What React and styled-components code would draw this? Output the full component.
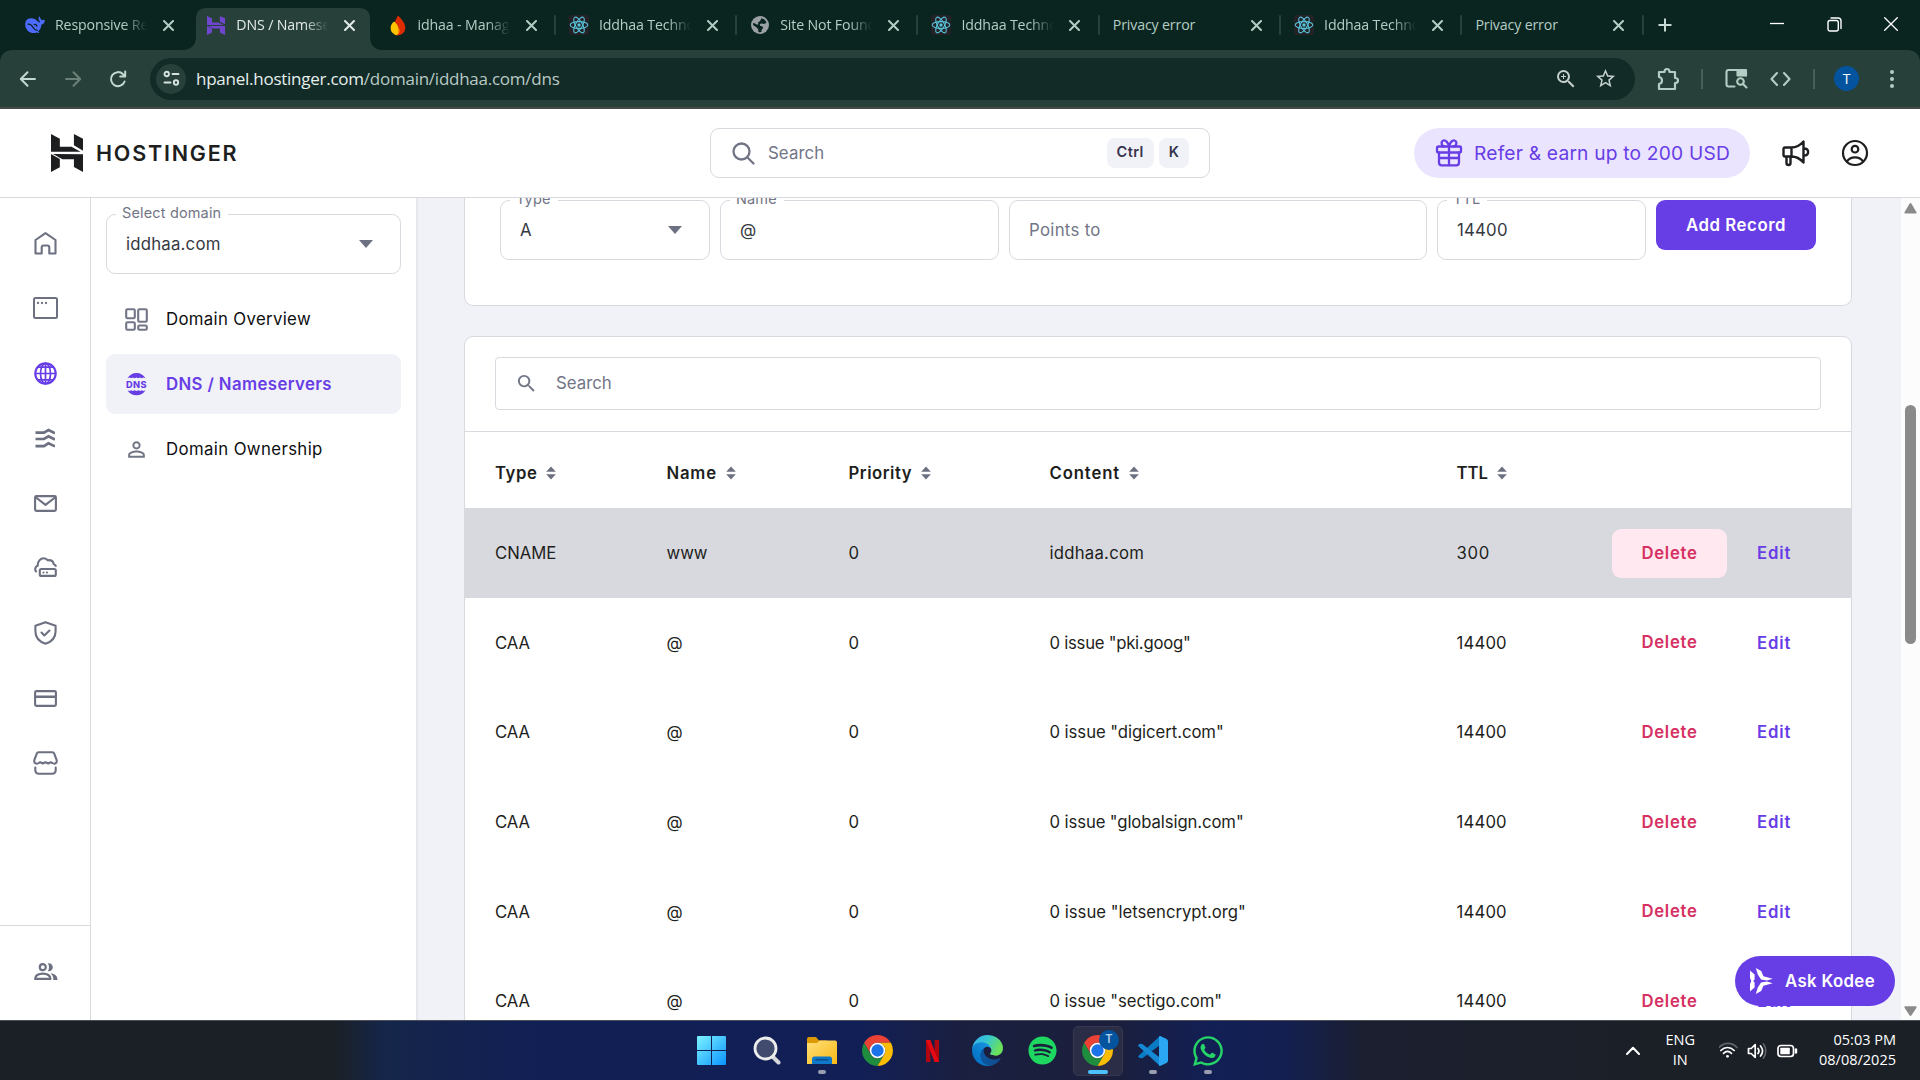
import React from "react";
import styled, { createGlobalStyle, css } from "styled-components";
import { FaSpotify, FaWhatsapp } from "react-icons/fa";
import { MdPersonOutline, MdSearch, MdZoomIn, MdStarBorder } from "react-icons/md";

const UI = `Inter, "DejaVu Sans", sans-serif`;
const OS = `"Open Sans", "Noto Sans", sans-serif`;
const PURPLE = "#673de6";
const LINE = "#d8dae0";
const GRAY = "#727586";
const INK = "#1d1e20";
const MINT = "#b4cdc4";

const GlobalStyle = createGlobalStyle`
  * { box-sizing: border-box; }
  body { margin: 0; overflow: hidden; background: #fff; }
  svg { display: block; flex: none; }
`;

const Screen = styled.div`
  width: 1920px;
  height: 1080px;
  display: flex;
  flex-direction: column;
  overflow: hidden;
  font-family: ${UI};
  color: ${INK};
`;

/* ---------- browser ---------- */
const TabStrip = styled.div`
  height: 50px;
  flex: none;
  display: flex;
  align-items: stretch;
  padding-left: 12px;
  background: #0a2520;
  font-family: ${OS};
`;
const Tab = styled.div`
  position: relative;
  width: 181.3px;
  flex: none;
  display: flex;
  align-items: center;
  padding: 0 0 0 13px;
  color: ${(p) => (p.$active ? "#e2ebe7" : MINT)};
`;
const ActiveShape = styled.svg`
  position: absolute;
  left: -11px;
  top: 8px;
`;
const TabIcon = styled.div`
  position: relative;
  width: 20px;
  margin-right: 10px;
  display: flex;
  justify-content: center;
`;
const TabTitle = styled.div`
  position: relative;
  width: ${(p) => (p.$wide ? 123 : 93)}px;
  overflow: hidden;
  white-space: nowrap;
  font-size: 14.2px;
  line-height: 24px;
  letter-spacing: -0.15px;
  ${(p) =>
    !p.$wide &&
    css`
      mask-image: linear-gradient(90deg, #000 74%, transparent 99%);
    `}
`;
const TabClose = styled.div`
  position: relative;
  width: 41px;
  display: flex;
  justify-content: center;
`;
const TabDivider = styled.div`
  width: 2px;
  height: 20px;
  margin-left: auto;
  border-radius: 1px;
  background: ${(p) => (p.$hidden ? "transparent" : "#28403a")};
`;
const NewTab = styled.div`
  width: 42px;
  display: flex;
  align-items: center;
  justify-content: center;
`;
const WindowButtons = styled.div`
  margin-left: auto;
  display: flex;
  align-items: center;
  gap: 42.5px;
  padding: 0 22px 2px 0;
`;
const ToolbarBack = styled.div`
  height: 59px;
  flex: none;
  background: #0a2520;
`;
const Toolbar = styled.div`
  height: 59px;
  display: flex;
  align-items: center;
  border-radius: 12px 12px 0 0;
  background: #28403a;
  border-bottom: 2px solid #434a48;
  padding: 0 20px 0 18px;
`;
const NavButtons = styled.div`
  width: 132px;
  flex: none;
  display: flex;
  gap: 25px;
`;
const AddressBar = styled.div`
  width: 1485px;
  flex: none;
  height: 42px;
  display: flex;
  align-items: center;
  border-radius: 21px;
  background: #122b27;
  padding: 0 18px 0 6px;
`;
const SiteInfo = styled.div`
  width: 30px;
  height: 30px;
  display: flex;
  align-items: center;
  justify-content: center;
  border-radius: 50%;
  background: #28403a;
`;
const Url = styled.div`
  flex: 1;
  margin-left: 10px;
  font: 17px/26px ${OS};
  letter-spacing: -0.25px;
  color: #b9c9c4;
  b {
    font-weight: 400;
    color: #e6efec;
  }
`;
const BarIcons = styled.div`
  display: flex;
  align-items: center;
  gap: 16px;
  color: #c3cfcb;
`;
const Extensions = styled.div`
  flex: 1;
  display: flex;
  align-items: center;
  justify-content: space-between;
  margin-left: 22px;
  color: ${MINT};
`;
const BarDivider = styled.div`
  width: 2px;
  height: 20px;
  background: #45605a;
`;
const Avatar = styled.div`
  width: 25px;
  height: 25px;
  margin: 0 3px 0 -3px;
  border-radius: 50%;
  background: #03539f;
  color: #fff;
  font: 14px/25px ${OS};
  text-align: center;
`;

/* ---------- header ---------- */
const Header = styled.header`
  height: 89px;
  flex: none;
  display: flex;
  align-items: center;
  border-bottom: 1px solid ${LINE};
  background: #fff;
  padding: 0 51px;
`;
const Brand = styled.div`
  width: 659px;
  display: flex;
  align-items: center;
  gap: 13px;
  font-size: 21.5px;
  font-weight: 600;
  letter-spacing: 1.8px;
`;
const HeaderSearch = styled.div`
  width: 500px;
  height: 50px;
  display: flex;
  align-items: center;
  border: 1px solid ${LINE};
  border-radius: 9px;
  padding: 0 20px 0 21px;
  color: ${GRAY};
  font-size: 16.8px;
`;
const SearchHint = styled.span`
  flex: 1;
  margin-left: 13px;
  letter-spacing: 0.1px;
`;
const Key = styled.kbd`
  height: 30px;
  margin-left: 5px;
  padding: 0 10px;
  border-radius: 8px;
  background: #f1f2f7;
  color: #36344d;
  font: 600 14.5px/28px ${UI};
  letter-spacing: ${(p) => p.$ls || 0}px;
`;
const HeaderActions = styled.div`
  margin-left: auto;
  display: flex;
  align-items: center;
  gap: 31.5px;
`;
const ReferPill = styled.div`
  width: 336px;
  height: 50px;
  display: flex;
  align-items: center;
  gap: 11px;
  padding-left: 21px;
  border-radius: 25px;
  background: #ebe4ff;
  color: ${PURPLE};
  font-size: 19.2px;
  letter-spacing: 0.19px;
  white-space: nowrap;
`;

/* ---------- body ---------- */
const Body = styled.div`
  height: 822px;
  flex: none;
  display: flex;
  overflow: hidden;
`;
const Rail = styled.nav`
  width: 91px;
  flex: none;
  display: flex;
  flex-direction: column;
  border-right: 1px solid ${LINE};
  color: #6d7081;
  padding-top: 13px;
`;
const RailItem = styled.div`
  height: 64.95px;
  flex: none;
  display: flex;
  align-items: center;
  justify-content: center;
  color: ${(p) => (p.$active ? PURPLE : "inherit")};
`;
const RailFooter = styled.div`
  height: 95px;
  margin-top: auto;
  display: flex;
  justify-content: center;
  padding: 37px 0 0 1px;
  border-top: 1px solid ${LINE};
`;
const Sidebar = styled.aside`
  width: 327px;
  flex: none;
  border-right: 2px solid #e6e8ee;
  padding: 16px 15px 0;
`;
const Field = styled.div`
  position: relative;
  width: ${(p) => p.$w}px;
  height: 60px;
  flex: none;
  display: flex;
  align-items: center;
  justify-content: space-between;
  padding: 0 27px 0 19px;
  border: 1px solid ${LINE};
  border-radius: 9px;
  font-size: 16.8px;
  letter-spacing: ${(p) => p.$ls || 0}px;
  color: ${(p) => (p.$empty ? GRAY : "#36383f")};
`;
const FieldLabel = styled.span`
  position: absolute;
  left: 9px;
  top: -12px;
  padding: 0 7px 0 6px;
  background: #fff;
  color: ${GRAY};
  font-size: 14.5px;
  line-height: 20px;
  letter-spacing: 0.15px;
`;
const MenuItem = styled.div`
  height: 60px;
  display: flex;
  align-items: center;
  gap: 18px;
  margin-top: ${(p) => p.$gap}px;
  padding-left: 19px;
  border-radius: 9px;
  background: ${(p) => (p.$active ? "#f1f2f7" : "transparent")};
  color: ${(p) => (p.$active ? PURPLE : "#0d0e10")};
  font-size: 16.8px;
  font-weight: ${(p) => (p.$active ? 600 : 400)};
  letter-spacing: ${(p) => p.$ls}px;
  svg {
    color: ${(p) => (p.$active ? PURPLE : "#727586")};
  }
`;
const PersonIcon = styled(MdPersonOutline)`
  margin: 0 -1px;
  font-size: 25px;
`;
const Main = styled.main`
  flex: 1;
  display: flex;
  flex-direction: column;
  gap: 30px;
  overflow: hidden;
  padding-left: 46px;
  background: #f1f2f7;
`;
const FormCard = styled.section`
  width: 1388px;
  height: 108px;
  flex: none;
  display: flex;
  align-items: flex-start;
  gap: 10px;
  padding: 2px 35px 0;
  background: #fff;
  border: 1px solid ${LINE};
  border-top: 0;
  border-radius: 0 0 9px 9px;
`;
const AddButton = styled.button`
  width: 160px;
  height: 50px;
  border: 0;
  padding: 0;
  border-radius: 9px;
  background: ${PURPLE};
  color: #fff;
  font: 600 16.8px ${UI};
  letter-spacing: 0.55px;
`;
const TableCard = styled.section`
  width: 1388px;
  height: 900px;
  flex: none;
  background: #fff;
  border: 1px solid ${LINE};
  border-radius: 9px 9px 0 0;
`;
const TableSearch = styled.div`
  height: 95px;
  padding: 20px 30px 0;
  border-bottom: 1px solid ${LINE};
`;
const SearchInput = styled.div`
  height: 53px;
  display: flex;
  align-items: center;
  gap: 18px;
  padding: 0 19px;
  border: 1px solid ${LINE};
  border-radius: 4px;
  color: ${GRAY};
  font-size: 16.8px;
  span {
    padding-bottom: 1px;
  }
`;
const Row = styled.div`
  display: grid;
  grid-template-columns: 171.5px 182px 201px 407px 155px 115px 1fr;
  align-items: center;
  height: 89.6px;
  margin: 0 -1px;
  padding: 1px 0 0 31px;
  font-size: 16.7px;
  background: ${(p) => (p.$hover ? "#d8d9df" : "transparent")};
`;
const HeadRow = styled(Row)`
  height: 76px;
  padding-top: 6px;
  font-weight: 600;
`;
const HeadCell = styled.div`
  display: flex;
  align-items: center;
  gap: 9px;
  letter-spacing: ${(p) => p.$ls}px;
`;
const Cell = styled.span`
  letter-spacing: ${(p) => p.$ls || 0}px;
`;
const DeleteButton = styled.div`
  height: 49px;
  padding-left: 1px;
  line-height: 49px;
  border-radius: 9px;
  text-align: center;
  font-weight: 600;
  letter-spacing: 0.7px;
  color: #d63163;
  background: ${(p) => (p.$hover ? "#ffe8ef" : "transparent")};
`;
const EditLink = styled.div`
  padding-left: 30.5px;
  font-weight: 600;
  letter-spacing: 0.9px;
  color: ${PURPLE};
`;
const Scrollbar = styled.div`
  width: 19px;
  flex: none;
  display: flex;
  flex-direction: column;
  align-items: center;
  background: #fcfcfc;
  padding: 5px 0 4px;
`;
const Thumb = styled.div`
  width: 11px;
  height: 239px;
  margin: 191px 0 auto;
  border-radius: 6px;
  background: #8a8a8a;
`;
const Kodee = styled.div`
  position: fixed;
  left: 1735px;
  top: 956px;
  width: 160px;
  height: 50px;
  display: flex;
  align-items: center;
  gap: 12px;
  padding-left: 15px;
  border-radius: 25px;
  background: ${PURPLE};
  color: #fff;
  font-size: 16.8px;
  font-weight: 600;
  letter-spacing: 0.35px;
  white-space: nowrap;
`;

/* ---------- taskbar ---------- */
const Taskbar = styled.footer`
  height: 60px;
  flex: none;
  display: flex;
  align-items: center;
  border-top: 1px solid #4a4f58;
  background: linear-gradient(90deg, #1b2027 0%, #1b2027 17.5%, #15264a 20%, #121f55 28%, #121f56 45%, #1a1f40 50%, #1b1f3c 58%, #121f55 63%, #131f50 67%, #1b1f30 71%, #1b2027 86%);
  padding: 0 24px 0 686.5px;
  color: #fff;
  font-family: ${OS};
`;
const AppButton = styled.div`
  position: relative;
  width: 50px;
  height: 50px;
  flex: none;
  margin-right: 5.2px;
  display: flex;
  align-items: center;
  justify-content: center;
  border-radius: 5px;
  border: 1px solid ${(p) => (p.$active ? "#35384f" : "transparent")};
  background: ${(p) => (p.$active ? "#2a2d45" : "transparent")};
`;
const Indicator = styled.div`
  position: absolute;
  bottom: 1px;
  width: ${(p) => (p.$active ? 20 : 8)}px;
  height: 4px;
  border-radius: 2px;
  background: ${(p) => (p.$active ? "#4cc2ff" : "#9a9db0")};
`;
const Badge = styled.div`
  position: absolute;
  right: 3px;
  top: 3px;
  width: 20px;
  height: 20px;
  border-radius: 50%;
  background: #03539f;
  color: #b9d3ea;
  font: 600 12px/18px ${OS};
  text-align: center;
`;
const Tray = styled.div`
  margin-left: auto;
  display: flex;
  align-items: center;
`;
const TrayText = styled.div`
  text-align: ${(p) => p.$align};
  font-size: 14.5px;
  line-height: 20px;
  white-space: nowrap;
  margin-left: ${(p) => p.$ml}px;
  padding-bottom: 1px;
`;
const TrayIcons = styled.div`
  margin-left: 24px;
`;

/* ---------- drawings ---------- */
const Svg = ({ w = 24, h, box = "0 0 24 24", sw = 2, children }) => (
  <svg width={w} height={h || w} viewBox={box} fill="none" stroke="currentColor" strokeWidth={sw} strokeLinecap="round" strokeLinejoin="round">
    {children}
  </svg>
);

const Mark = ({ w, h, color }) => (
  <svg width={w} height={h} viewBox="1.8 0 20.4 24" preserveAspectRatio="none" fill={color}>
    <path d="M16.415 0v7.16l5.785 3.384V2.949L16.415 0ZM1.8 0v11.237h18.815L14.89 8.09l-7.457-.003V3.024L1.8 0Zm14.615 20.894v-5.019l-7.514-.005c.007.033-5.82-3.197-5.82-3.197l19.119.091V24l-5.785-3.106ZM1.8 13.551V24l5.633-3.050v-5.100L1.8 12.700Z" />
  </svg>
);

const Whale = () => (
  <svg width="20" height="18" viewBox="0 0 20 18">
    <path fill="#4d6bfe" d="M10.3 3.2C7 1.5 3 2 1.2 4.600C-.8 7.600.3 12.500 3 15c2.600 2.300 6 2.400 8.600 1.400l2.200.6c.5.100.7-.5.3-.8l-.9-.8c2-1.500 3-4 3.100-6.600 1.900-.4 3.100-1.800 3.500-4.300.1-.7-.4-1-.9-.7-1 .6-2 .5-2.800-.3-.7-.7-1-1.700-1.300-2.600-.2-.6-.8-.6-1 0-.4 1.500-.2 3 .8 4.300.4.500.5 1 .3 1.600-1-.6-2.400-1.600-4.600-3.600z" />
    <path fill="none" stroke="#0a2520" strokeWidth="1.300" strokeLinecap="round" d="M3 8.200c2.500-.4 4 1.200 5.300 3.500 1 1.700 2.200 2.600 4 2.600M9.300 8.600c1.200-.4 2.400.3 2.600 1.600" />
  </svg>
);

const Flame = () => (
  <svg width="16" height="21" viewBox="0 0 16 21">
    <path fill="#dd2c00" d="M8 .5c3 3 7.300 7.500 7.300 12.300A7.500 7.500 0 0 1 5 19.800L4.500 9C5 5.500 6.500 3 8 .5z" />
    <path fill="#ffc400" d="M4 6.500c1.500 1 3.800 3.500 4.400 6 .5 2.500 0 5.500-1.400 7.800A7.300 7.300 0 0 1 .6 13C.6 10 2.300 8 4 6.500z" />
    <path fill="#ff9100" d="M8.500 13c2 1.500 1.500 5.500-1.400 7.300C8 18 8.700 15.500 8.500 13z" />
  </svg>
);

const Atom = () => (
  <svg width="20" height="20" viewBox="0 0 20 20" fill="none" stroke="#58c4dc" strokeWidth="1.100">
    <rect width="20" height="20" rx="2" fill="#232226" stroke="none" />
    <ellipse cx="10" cy="10" rx="8.800" ry="3.400" />
    <ellipse cx="10" cy="10" rx="8.800" ry="3.400" transform="rotate(60 10 10)" />
    <ellipse cx="10" cy="10" rx="8.800" ry="3.400" transform="rotate(120 10 10)" />
    <circle cx="10" cy="10" r="1.700" fill="#58c4dc" stroke="none" />
  </svg>
);

const Earth = () => (
  <svg width="18" height="18" viewBox="0 0 18 18">
    <circle cx="9" cy="9" r="9" fill="#9aa0a6" />
    <path fill="#0a2520" d="M10.500 2.200c2.500.6 4.300 2.300 5 4.500l-2.300 1.300-2.700-.6-1.700.6.300 1.800 2.300.6.800 1.400-1.500 2-.3 2.200c-1 .2-2 .2-3-.1l-.2-2.600-1.900-2L2 9c0-.8.200-1.500.5-2.200l3.800 2 1.200-.7-.6-1.600 2-1.200z" />
  </svg>
);

const Cross = () => (
  <Svg w={11} box="0 0 11 11" sw={2}>
    <path d="M1 1l9 9M10 1l-9 9" />
  </Svg>
);

const SortArrows = () => (
  <svg width="10" height="14" viewBox="0 0 10 14" fill="#6d7081">
    <path d="M5 .5L9.800 5.700H.2zM5 13.500L9.800 8.300H.2z" />
  </svg>
);
const Caret = () => (
  <svg width="14" height="8" viewBox="0 0 14 8" fill="#6d7081">
    <path d="M0 0h14L7 8z" />
  </svg>
);

const icons = {
  home: (
    <Svg w={23} box="0 0 23 23" sw={2.100}>
      <path d="M1.500 8L11.500 1.200 21.500 8v13.500h-6.200v-6a2 2 0 0 0-2-2h-3.600a2 2 0 0 0-2 2v6H1.500z" />
    </Svg>
  ),
  site: (
    <Svg w={25} h={22} box="0 0 25 22">
      <rect x="1" y="1" width="23" height="20" rx="1.500" />
      <path d="M5 6h.01M9 6h.01M13 6h.01" strokeWidth="2.300" />
    </Svg>
  ),
  globe: (
    <Svg w={23} box="0 0 23 23" sw={2.100}>
      <circle cx="11.500" cy="11.500" r="10.200" />
      <ellipse cx="11.500" cy="11.500" rx="5" ry="10.200" strokeWidth="1.700" />
      <path d="M11.500 1.500v20M1.500 11.500h20" strokeWidth="1.700" />
      <path d="M4.500 5.200h14M4.500 17.800h14" strokeWidth="1.800" />
    </Svg>
  ),
  waves: (
    <svg width="20" height="20" viewBox="0 0 20 20" fill="none" stroke="currentColor" strokeWidth="2.700">
      <path d="M.5 4.700H9L13.500 2l6.500 3.200M.5 11H9l4.500-2.700 6.500 3.200M.5 18.200H9l4.500-3 6.500 3.200" />
    </svg>
  ),
  mail: (
    <Svg w={23} h={17} box="0 0 23 17" sw={2.100}>
      <rect x="1.100" y="1.100" width="20.800" height="14.800" rx="1.300" />
      <path d="M2 2.500l9.500 7.300 9.500-7.300" />
    </Svg>
  ),
  cloud: (
    <Svg w={23} h={22} box="0 0 23 22" sw={2.100}>
      <path d="M2 14.500C.4 12.500 1.300 9.500 3.800 8.800 3.300 4.500 6.500 1.200 10 1.300c1.800.1 2.700.8 3.700 1.900 3.500-.5 5.500 1 6.100 4 .9.200 1.500.8 1.900 1.600" />
      <rect x="5.800" y="12" width="16" height="6.900" rx="1.500" />
      <path d="M9.500 15.500h.01M13 15.500h.01" />
    </Svg>
  ),
  shield: (
    <Svg w={23} h={24} box="0 0 23 24" sw={2.100}>
      <path d="M11.500 1.200L21.600 4.700v5.500c0 6-4 10.500-10.100 12.600C5.400 20.700 1.400 16.200 1.400 10.200V4.700z" />
      <path d="M7.500 11.600l2.800 2.900 5.200-5" />
    </Svg>
  ),
  card: (
    <Svg w={23} h={17} box="0 0 23 17" sw={2.100}>
      <rect x="1.100" y="1.100" width="20.800" height="14.800" rx="1.300" />
      <path d="M1.500 6.800h20" strokeWidth="2.600" />
    </Svg>
  ),
  store: (
    <Svg w={25} h={24} box="0 0 25 24" sw={2.100}>
      <path d="M5.500 1.200h14q1.200 0 1.600 1.100l2.600 6.900c.5 3-1.700 4-3.600 3.200l-2.400-1.200-2.500 1.300-2.700-1.300-2.700 1.300-2.500-1.300-2.400 1.200C3 13.200.8 12.200 1.300 9.200l2.600-6.900q.4-1.100 1.600-1.100z" />
      <path d="M2.300 16.500v2.500q0 3.700 3.700 3.700h13q3.700 0 3.700-3.700v-2.500" />
    </Svg>
  ),
  team: (
    <svg width="24" height="17" viewBox="0 0 24 17" fill="none" stroke="currentColor" strokeWidth="2.200">
      <circle cx="8.800" cy="4.200" r="3" />
      <path d="M1.300 15.900c-.3-3.300 3-5.300 7.500-5.300s7.800 2 7.500 5.300z" />
      <path stroke="none" fill="currentColor" d="M13.900.2c6.500-.7 6.500 8.800 0 8 1.500-2.500 1.500-5.500 0-8zM16.500 10.300c4.500.4 7 2.500 7 6.700h-4.200c.2-3-.8-5-2.800-6.700z" />
    </svg>
  ),
  overview: (
    <Svg w={23} box="0 0 23 23" sw={2.100}>
      <rect x="1.200" y="1.200" width="8.600" height="9" rx="1.200" />
      <rect x="13.200" y="1.200" width="8.600" height="12.500" rx="1.200" />
      <rect x="1.200" y="14.200" width="8.600" height="7.600" rx="1.200" />
      <rect x="13.200" y="17.500" width="8.600" height="4.300" rx="1.200" />
    </Svg>
  ),
  dns: (
    <svg width="23" height="24" viewBox="0 0 23 24" fill="currentColor">
      <path d="M2.500 6.300C4.500 3 7.500 1 11.500 1s7 2 9 5.300l-2.200-.8-1.400.8-1.800-.8-1.700.8-1.900-.8-1.900.8-1.700-.8-1.800.8-1.400-.8zM2.500 18.200c2 3.300 5 5.100 9 5.100s7-1.800 9-5.100l-2.200.8-1.400-.8-1.800.8-1.700-.8-1.900.8-1.900-.8-1.700.8-1.800-.8-1.400.8z" />
      <text x="11.500" y="15.700" textAnchor="middle" fontFamily="Inter, sans-serif" fontWeight="800" fontSize="9.200">DNS</text>
    </svg>
  ),
};

const Chrome = () => (
  <svg width="31" height="31" viewBox="2 2 44 44">
    <path fill="#ea4335" d="M4.950 13A22 22 0 0 1 43.050 13H24A11 11 0 0 0 14.470 29.500z" />
    <path fill="#1e8e3e" d="M4.950 13L14.470 29.500A11 11 0 0 0 33.530 29.500L24 46A22 22 0 0 1 4.950 13z" />
    <path fill="#fbbc04" d="M43.050 13A22 22 0 0 1 24 46L33.530 29.500A11 11 0 0 0 24 13z" />
    <circle cx="24" cy="24" r="11" fill="#fff" />
    <circle cx="24" cy="24" r="8.700" fill="#1a73e8" />
  </svg>
);

const Edge = () => (
  <svg width="31" height="31" viewBox="0 0 256 256">
    <defs>
      <linearGradient id="e1" x1="0" y1="0" x2="1" y2="0"><stop offset="0" stopColor="#0c59a4" /><stop offset="1" stopColor="#114a8b" /></linearGradient>
      <linearGradient id="e2" x1="1" y1="0" x2="0" y2="1"><stop offset="0" stopColor="#1b9de2" /><stop offset="1" stopColor="#0067c0" /></linearGradient>
      <linearGradient id="e3" x1="0" y1="0" x2="1" y2=".4"><stop offset="0" stopColor="#35a8f1" /><stop offset=".5" stopColor="#36c8d0" /><stop offset="1" stopColor="#6be05a" /></linearGradient>
    </defs>
    <path fill="url(#e1)" d="M231 190.500c-3.400 1.800-6.900 3.400-10.500 4.700a101.500 101.500 0 0 1-35.900 6.400c-47.300 0-88.500-32.500-88.500-74.300A31.500 31.500 0 0 1 112.500 100c-42.800 1.800-53.800 46.400-53.800 72.500 0 74 68.100 81.400 82.800 81.400 7.900 0 19.800-2.300 27-4.600l1.300-.4a128.300 128.300 0 0 0 66.600-52.800 4 4 0 0 0-5.400-5.600z" />
    <path fill="url(#e2)" d="M105.700 241.400a79.200 79.200 0 0 1-22.700-21.300 80.700 80.700 0 0 1 29.500-120c3.200-1.500 8.500-4.100 15.600-4a32.400 32.400 0 0 1 25.700 13 31.900 31.900 0 0 1 6.300 18.700c0-.2 24.500-79.600-80-79.600-43.900 0-80 41.600-80 78.200a130.200 130.200 0 0 0 12.100 56 128 128 0 0 0 156.400 67 75.500 75.500 0 0 1-62.800-8z" />
    <path fill="url(#e3)" d="M152.300 148.900c-.9 1-3.400 2.500-3.400 5.600 0 2.600 1.700 5.100 4.700 7.200 14.400 10 41.500 8.700 41.600 8.700a59.600 59.600 0 0 0 30.300-8.300 61.400 61.400 0 0 0 30.400-52.900c.3-22.400-8-37.300-11.300-43.900C223.400 23.800 177.700 0 128 0A128 128 0 0 0 0 126.200c.5-36.500 36.800-66 80-66 3.500 0 23.500.3 42 10a72.600 72.600 0 0 1 30.900 29.300c6.100 10.600 7.200 24.100 7.200 29.500s-2.700 13.300-7.800 19.900z" />
  </svg>
);

const Windows = () => (
  <svg width="29" height="29" viewBox="0 0 29 29">
    <defs>
      <linearGradient id="win" x1="0" y1="0" x2="1" y2="1"><stop offset="0" stopColor="#7df3ff" /><stop offset="1" stopColor="#0a93ff" /></linearGradient>
    </defs>
    <path fill="url(#win)" d="M0 1q0-1 1-1h13v14H0zM15 0h13q1 0 1 1v13H15zM0 15h14v14H1q-1 0-1-1zM15 15h14v13q0 1-1 1H15z" />
  </svg>
);

const Lens = () => (
  <svg width="28" height="29" viewBox="0 0 28 29">
    <path d="M19 20l6.500 6.500" stroke="#d5d6da" strokeWidth="4" strokeLinecap="round" />
    <circle cx="12.500" cy="12.500" r="10.500" fill="#414b6e" stroke="#eceded" strokeWidth="2.800" />
  </svg>
);

const Folder = () => (
  <svg width="30" height="28" viewBox="0 0 30 28">
    <defs>
      <linearGradient id="fo" x1="0" y1="0" x2="1" y2="1"><stop offset="0" stopColor="#ffe07a" /><stop offset="1" stopColor="#f9b914" /></linearGradient>
    </defs>
    <path fill="#dd9a05" d="M0 2q0-2 2-2h7l3 3.500h8V8H0z" />
    <path fill="url(#fo)" d="M0 6h10l2.500-2.500H28q2 0 2 2V27H0z" />
    <path fill="#0f78c8" d="M5 27v-5q0-2.500 2.500-2.500h15Q25 19.500 25 22v5z" />
    <path d="M8.500 22.800h13" stroke="#0a4a86" strokeWidth="1.300" />
  </svg>
);

const Netflix = () => (
  <svg width="13" height="22" viewBox="0 0 13 22">
    <path fill="#b1060f" d="M0 0h4.400v22H0zM8.600 0H13v22H8.600z" />
    <path fill="#e50914" d="M0 0h4.400L13 22H8.600z" />
  </svg>
);

const VsCode = () => (
  <svg width="30" height="30" viewBox="0 0 30 30">
    <path fill="#0a7cc4" d="M22 0L29 3.400 22 9 4.500 22.300 1.300 22 0 20.300z" />
    <path fill="#1689d4" d="M22 30l-1-9L4 7.700 1.300 8 0 9.700z" />
    <path fill="#2aa6f2" d="M22 0l6.500 3Q30 3.700 30 5.200v19.600q0 1.500-1.500 2.200L22 30q-1 0-1-1V1q0-1 1-1z" />
  </svg>
);

const SpotifyIcon = styled(FaSpotify)`
  font-size: 29px;
  color: #1ed760;
`;
const WhatsAppIcon = styled(FaWhatsapp)`
  font-size: 34px;
  color: #25d366;
`;

/* ---------- data ---------- */
const tabs = [
  [<Whale />, "Responsive React"],
  [<Mark w={18} h={19} color="#6f47cf" />, "DNS / Nameservers"],
  [<Flame />, "idhaa - Manage"],
  [<Atom />, "Iddhaa Technologies"],
  [<Earth />, "Site Not Found"],
  [<Atom />, "Iddhaa Technologies"],
  [null, "Privacy error"],
  [<Atom />, "Iddhaa Technologies"],
  [null, "Privacy error"],
];
const rail = ["home", "site", "globe", "waves", "mail", "cloud", "shield", "card", "store"];
const heads = [["Type", 0.6], ["Name", 0.8], ["Priority", 0.55], ["Content", 0.9], ["TTL", 0]];
const records = [
  ["CNAME", "www", "iddhaa.com", "300", 0.25],
  ["CAA", "@", '0 issue "pki.goog"', "14400", -0.25],
  ["CAA", "@", '0 issue "digicert.com"', "14400", -0.05],
  ["CAA", "@", '0 issue "globalsign.com"', "14400", -0.1],
  ["CAA", "@", '0 issue "letsencrypt.org"', "14400", 0],
  ["CAA", "@", '0 issue "sectigo.com"', "14400", -0.05],
];

export default function App() {
  return (
    <Screen>
      <GlobalStyle />
      <TabStrip>
        {tabs.map(([icon, title], i) => (
          <Tab key={i} $active={i === 1}>
            {i === 1 && (
              <ActiveShape width="200" height="42" viewBox="0 0 200 42">
                <path fill="#28403a" d="M0 42c9 0 14-5 14-13V11Q14 0 25 0h152q11 0 11 11v18c0 8 5 13 12 13z" />
              </ActiveShape>
            )}
            {icon && <TabIcon>{icon}</TabIcon>}
            <TabTitle $wide={!icon}>{title}</TabTitle>
            <TabClose><Cross /></TabClose>
            <TabDivider $hidden={i < 2} />
          </Tab>
        ))}
        <NewTab>
          <svg width="14" height="14" viewBox="0 0 14 14" stroke="#c6d9d2" strokeWidth="2"><path d="M7 .5v13M.5 7h13" /></svg>
        </NewTab>
        <WindowButtons>
          <svg width="14" height="14" viewBox="0 0 14 14" stroke="#fff" strokeWidth="1.300"><path d="M0 6.500h14" /></svg>
          <Svg w={15} box="0 0 15 15" sw={1.400}>
            <g stroke="#fff"><rect x="1" y="3.500" width="10.300" height="10.500" rx="2" /><path d="M4 1h7q3 0 3 3v7.500" /></g>
          </Svg>
          <Svg w={14} box="0 0 14 14" sw={1.300}><path stroke="#fff" d="M.7.7l12.600 12.600M13.300.7L.7 13.300" /></Svg>
        </WindowButtons>
      </TabStrip>

      <ToolbarBack>
        <Toolbar>
          <NavButtons>
            <Svg w={20} box="0 0 20 20"><path stroke="#c2d8d0" d="M17 10H3M9.500 3.300L2.800 10l6.700 6.700" /></Svg>
            <Svg w={20} box="0 0 20 20"><path stroke="#6a8079" d="M3 10h14M10.500 3.300l6.700 6.700-6.700 6.700" /></Svg>
            <Svg w={20} box="0 0 20 20"><path stroke="#c2d8d0" d="M16.600 12.500A7 7 0 1 1 15 5.200l2 1.800M17.200 2.500V7.500h-5" /></Svg>
          </NavButtons>
          <AddressBar>
            <SiteInfo>
              <Svg w={17} box="0 0 17 17" sw={1.900}>
                <g stroke="#d7e3df"><circle cx="3.700" cy="4" r="2.200" /><path d="M9.500 4h6M1.500 12.500h6" /><circle cx="13" cy="12.500" r="2.200" /></g>
              </Svg>
            </SiteInfo>
            <Url><b>hpanel.hostinger.com</b>/domain/iddhaa.com/dns</Url>
            <BarIcons>
              <MdZoomIn size={24} />
              <MdStarBorder size={23} />
            </BarIcons>
          </AddressBar>
          <Extensions>
            <Svg w={22} h={24} box="0 0 22 24" sw={2.200}>
              <path d="M2 5h5.500c0-4 5-4 5 0H18v6c4 0 4 5 0 5v6H2v-5c4-.5 4-6.500 0-7z" />
            </Svg>
            <BarDivider />
            <Svg w={23} h={21} box="0 0 23 21" sw={2.100}>
              <path d="M9.500 18.500h-6Q1.500 18.500 1.500 16.500V4q0-2 2-2H19q2 0 2 2v3.500" />
              <path d="M12.500 2v5.500h8.500V2z" fill="currentColor" />
              <circle cx="15.500" cy="13.500" r="3.300" />
              <path d="M18 16l3.500 3.500" />
            </Svg>
            <Svg w={21} h={16} box="0 0 21 16" sw={2.100}><path d="M7 2L1.500 8 7 14M14 2l5.500 6-5.500 6" /></Svg>
            <BarDivider />
            <Avatar>T</Avatar>
            <svg width="16" height="20" viewBox="0 0 16 20" fill={MINT}>
              <circle cx="8" cy="3" r="2" /><circle cx="8" cy="10" r="2" /><circle cx="8" cy="17" r="2" />
            </svg>
          </Extensions>
        </Toolbar>
      </ToolbarBack>

      <Header>
        <Brand><Mark w={32} h={38} color={INK} />HOSTINGER</Brand>
        <HeaderSearch>
          <Svg w={23} box="0 0 23 23" sw={2.300}><circle cx="9.500" cy="9.500" r="8" /><path d="M15.500 15.500l6 6" /></Svg>
          <SearchHint>Search</SearchHint>
          <Key $ls={0.4}>Ctrl</Key>
          <Key>K</Key>
        </HeaderSearch>
        <HeaderActions>
          <ReferPill>
            <Svg w={28} box="0 0 28 28" sw={2.300}>
              <rect x="2" y="7.500" width="24" height="6" rx="1.500" />
              <path d="M4 13.500v10q0 2.800 2.800 2.800h14.400q2.800 0 2.800-2.800v-10M14 7.500v18.500M4 19h20M14 7.500C13 3 10.500 1 8.500 1.500 5.500 2.300 6.500 7 9 7.500M14 7.500c1-4.500 3.500-6.500 5.500-6 3 .8 2 5.500-.5 6" />
            </Svg>
            Refer &amp; earn up to 200 USD
          </ReferPill>
          <Svg w={28} box="0 0 28 28" sw={2.400}>
            <path d="M9.500 8.500H3.200Q1.500 8.500 1.500 10.200v5.600q0 1.700 1.700 1.700h6.300zM9.500 8.500c5 0 8.500-2 12-6v21c-3.500-4-7-6-12-6M4.500 17.500V24q0 2 2 2t2-2v-6.500M22 9.500c5.500 0 5.500 7 0 7" />
          </Svg>
          <Svg w={28} box="0 0 28 28" sw={2.200}>
            <circle cx="14" cy="14" r="12" />
            <circle cx="14" cy="10.200" r="3.300" />
            <path d="M6 22.500c3-5.500 13-5.500 16 0" />
          </Svg>
        </HeaderActions>
      </Header>

      <Body>
        <Rail>
          {rail.map((name) => (
            <RailItem key={name} $active={name === "globe"}>{icons[name]}</RailItem>
          ))}
          <RailFooter>{icons.team}</RailFooter>
        </Rail>
        <Sidebar>
          <Field $w={295} $ls={0.2}>
            <FieldLabel>Select domain</FieldLabel>
            iddhaa.com
            <Caret />
          </Field>
          <MenuItem $gap={15} $ls={0.33}>{icons.overview}Domain Overview</MenuItem>
          <MenuItem $gap={5} $ls={0.38} $active>{icons.dns}DNS / Nameservers</MenuItem>
          <MenuItem $gap={5} $ls={0.38}><PersonIcon />Domain Ownership</MenuItem>
        </Sidebar>
        <Main>
          <FormCard>
            <Field $w={210}><FieldLabel>Type</FieldLabel>A<Caret /></Field>
            <Field $w={279}><FieldLabel>Name</FieldLabel>@</Field>
            <Field $w={418} $empty $ls={0.3}>Points to</Field>
            <Field $w={209} $ls={0.2}><FieldLabel>TTL</FieldLabel>14400</Field>
            <AddButton>Add Record</AddButton>
          </FormCard>
          <TableCard>
            <TableSearch>
              <SearchInput><MdSearch size={23} /><span>Search</span></SearchInput>
            </TableSearch>
            <HeadRow>
              {heads.map(([label, ls]) => (
                <HeadCell key={label} $ls={ls}>{label}<SortArrows /></HeadCell>
              ))}
            </HeadRow>
            {records.map(([type, name, content, ttl, ls], i) => (
              <Row key={content} $hover={i === 0}>
                <Cell>{type}</Cell>
                <Cell>{name}</Cell>
                <Cell>0</Cell>
                <Cell $ls={ls}>{content}</Cell>
                <Cell $ls={i === 0 ? 0.7 : 0.18}>{ttl}</Cell>
                <DeleteButton $hover={i === 0}>Delete</DeleteButton>
                <EditLink>Edit</EditLink>
              </Row>
            ))}
          </TableCard>
        </Main>
        <Scrollbar>
          <svg width="13" height="11" viewBox="0 0 13 11" fill="#8a8a8a"><path d="M6.500 0q.6 0 1 .7l5 8.500q.5 1.300-.8 1.300H1.300Q0 10.500.5 9.200l5-8.500q.4-.7 1-.7z" /></svg>
          <Thumb />
          <svg width="13" height="10" viewBox="0 0 13 10" fill="#8a8a8a"><path d="M6.500 10q.6 0 1-.7l5-7.500Q13 .3 11.700.3H1.300Q0 .3.5 1.800l5 7.500q.4.700 1 .7z" /></svg>
        </Scrollbar>
      </Body>

      <Taskbar>
        <AppButton><Windows /></AppButton>
        <AppButton><Lens /></AppButton>
        <AppButton><Folder /><Indicator /></AppButton>
        <AppButton><Chrome /></AppButton>
        <AppButton><Netflix /></AppButton>
        <AppButton><Edge /></AppButton>
        <AppButton><SpotifyIcon /></AppButton>
        <AppButton $active><Chrome /><Badge>T</Badge><Indicator $active /></AppButton>
        <AppButton><VsCode /><Indicator /></AppButton>
        <AppButton><WhatsAppIcon /><Indicator /></AppButton>
        <Tray>
          <Svg w={14} h={9} box="0 0 14 9" sw={2}><path d="M1 8l6-6.300L13 8" /></Svg>
          <TrayText $align="center" $ml={26}>ENG<br />IN</TrayText>
          <TrayIcons>
            <Svg w={80} h={20} box="0 0 80 20" sw={1.700}>
              <g transform="translate(-2 0)">
                <path opacity=".3" d="M1.500 7.500c5-5.500 13-5.500 18 0" transform="translate(.5 -1)" />
                <path d="M3.800 9.500c4-4 9.400-4 13.400 0M6.500 12.300c2.500-2.400 5.500-2.400 8 0" />
                <circle cx="10.500" cy="15.300" r="1.400" fill="#fff" stroke="none" />
                <path d="M31.500 7.500h2.700l4-3.800v12.600l-4-3.800h-2.700z" />
                <path d="M41 7.500c1.200 1.500 1.200 3.500 0 5M43.500 5c2.500 3 2.500 7 0 10" />
                <path opacity=".3" d="M46.500 3c3 4 3 10 0 14" />
                <rect x="61" y="4.500" width="15.500" height="11" rx="3" />
                <rect x="63.300" y="6.800" width="9.500" height="6.400" rx=".5" fill="#fff" stroke="none" />
                <path d="M79 8.500v3" strokeWidth="2.400" />
              </g>
            </Svg>
          </TrayIcons>
          <TrayText $align="right" $ml={20}>05:03 PM<br />08/08/2025</TrayText>
        </Tray>
      </Taskbar>

      <Kodee>
        <svg width="23" height="26" viewBox="0 0 23 26" fill="#fff">
          <path d="M0 2.500l4.600 4v5L3.200 13l1.400 1.500v5L0 23.500V16l1.300-3L0 10z" />
          <path d="M5.800 0l5.400 3 2.200 5.200 9.300 2.600-5.700 1.700-6-1-3.200-5z" />
          <path d="M5.800 26l5.400-3 2.200-5.200 9.300-2.600-5.700-1.700-6 1-3.200 5z" />
        </svg>
        Ask Kodee
      </Kodee>
    </Screen>
  );
}
